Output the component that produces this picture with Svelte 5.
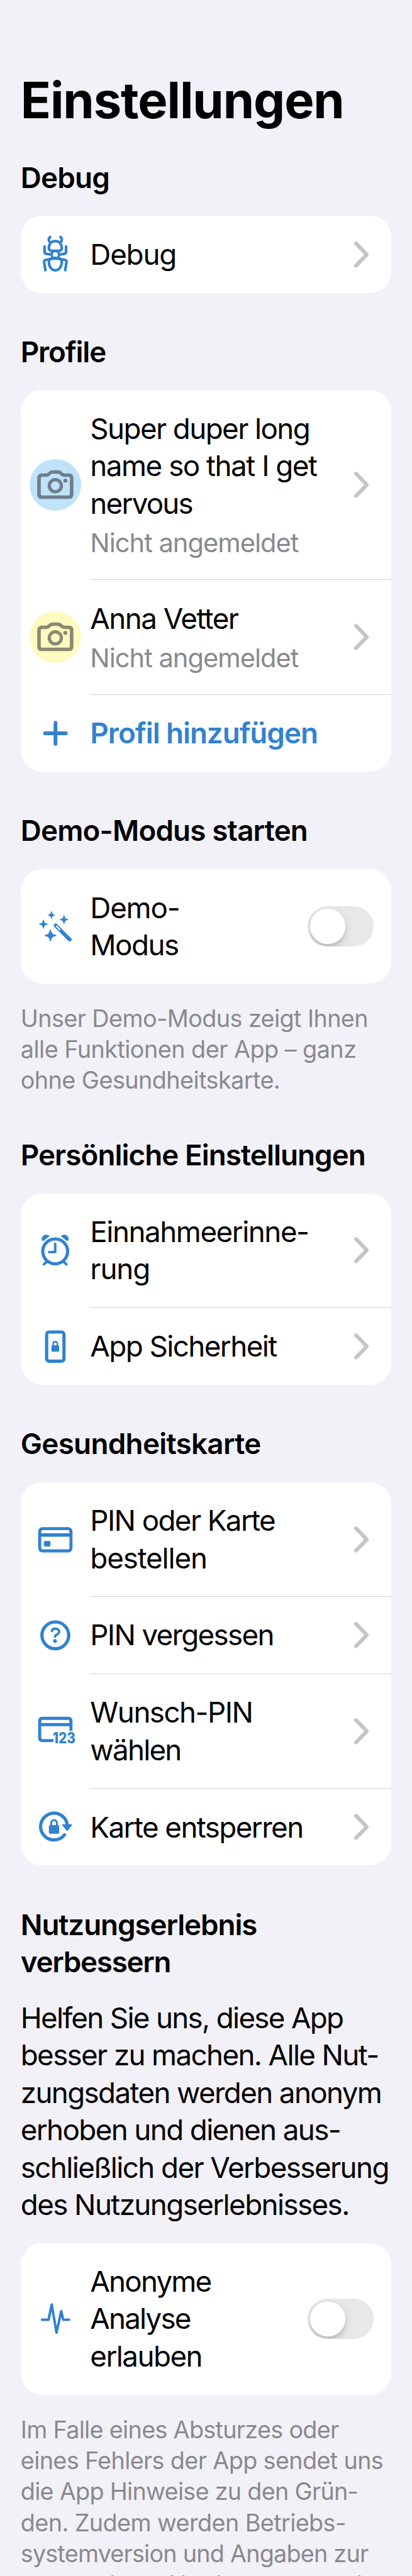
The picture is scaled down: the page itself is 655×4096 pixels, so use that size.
<script>
  // Each line of copy is a pair: the text and its tracking in em.
  const sections = [
    {
      title: [['Debug', -0.0169]],
      rows: [{ icon: 'ant', lines: [['Debug', -0.0263]] }]
    },
    {
      title: [['Profile', -0.0257]],
      rows: [
        {
          icon: 'camera', tone: 'blue',
          lines: [['Super duper long', -0.0349], ['name so that I get', -0.0325], ['nervous', -0.0387]],
          status: ['Nicht angemeldet', -0.0242]
        },
        {
          icon: 'camera', tone: 'yellow',
          lines: [['Anna Vetter', -0.0341]],
          status: ['Nicht angemeldet', -0.0242]
        },
        { icon: 'plus', lines: [['Profil hinzufügen', -0.0227]], action: true }
      ]
    },
    {
      title: [['Demo-Modus starten', -0.0178]],
      rows: [{ icon: 'wand', lines: [['Demo-', -0.026], ['Modus', -0.0337]], toggle: true }],
      footer: [
        ['Unser Demo-Modus zeigt Ihnen', -0.0157],
        ['alle Funktionen der App – ganz', -0.0141],
        ['ohne Gesundheitskarte.', -0.0148]
      ]
    },
    {
      title: [['Persönliche Einstellungen', -0.0203]],
      rows: [
        { icon: 'alarm', lines: [['Einnahmeerinne-', -0.0321], ['rung', -0.0245]] },
        { icon: 'phone', lines: [['App Sicherheit', -0.0343]] }
      ]
    },
    {
      title: [['Gesundheitskarte', -0.0149]],
      rows: [
        { icon: 'card', lines: [['PIN oder Karte', -0.0353], ['bestellen', -0.0248]] },
        { icon: 'question', lines: [['PIN vergessen', -0.0368]] },
        { icon: 'card123', lines: [['Wunsch-PIN', -0.0333], ['wählen', -0.0387]] },
        { icon: 'unlock', lines: [['Karte entsperren', -0.0342]] }
      ]
    },
    {
      title: [['Nutzungserlebnis', -0.0237], ['verbessern', -0.0278]],
      intro: [
        ['Helfen Sie uns, diese App', -0.0369],
        ['besser zu machen. Alle Nut-', -0.0359],
        ['zungsdaten werden anonym', -0.0356],
        ['erhoben und dienen aus-', -0.0354],
        ['schließlich der Verbesserung', -0.0349],
        ['des Nutzungserlebnisses.', -0.0348]
      ],
      rows: [
        { icon: 'pulse', lines: [['Anonyme', -0.0396], ['Analyse', -0.0398], ['erlauben', -0.0339]], toggle: true }
      ],
      footer: [
        ['Im Falle eines Absturzes oder', -0.0185],
        ['eines Fehlers der App sendet uns', -0.0169],
        ['die App Hinweise zu den Grün-', -0.0191],
        ['den. Zudem werden Betriebs-', -0.0158],
        ['systemversion und Angaben zur', -0.0208],
        ['verwendeten Hardware gesendet', -0.0175]
      ]
    }
  ];

  // Four-pointed sparkle centred at x, y with arm length r.
  function sparkle(x, y, r) {
    const a = r * 0.22;
    const t = r * 0.09;
    return `M${x - t} ${y - r}Q${x} ${y - r - 1} ${x + t} ${y - r}C${x + a} ${y - a * 1.6} ${x + a * 1.6} ${y - a} ${x + r} ${y - t}Q${x + r + 1} ${y} ${x + r} ${y + t}C${x + a * 1.6} ${y + a} ${x + a} ${y + a * 1.6} ${x + t} ${y + r}Q${x} ${y + r + 1} ${x - t} ${y + r}C${x - a} ${y + a * 1.6} ${x - a * 1.6} ${y + a} ${x - r} ${y + t}Q${x - r - 1} ${y} ${x - r} ${y - t}C${x - a * 1.6} ${y - a} ${x - a} ${y - a * 1.6} ${x - t} ${y - r}Z`;
  }
</script>

{#snippet textLines(lines)}
  {#each lines as [text, tracking]}
    <span class="line" style="letter-spacing: {tracking}em">{text}</span>
  {/each}
{/snippet}

{#snippet glyph(name)}
  <svg class="icon" viewBox="-60 -60 120 120" aria-hidden="true">
    {#if name === 'ant'}
      <g class="stroke" stroke-width="6.2">
        <path d="M-12 -39.8C-16 -36.5 -16.5 -31 -12.5 -27.5M12 -39.8C16 -36.5 16.5 -31 12.5 -27.5" />
        <path d="M-8.5 -7.4C-13 -7.4 -15 -10.5 -15 -14C-15 -24 -9 -30 0 -30C9 -30 15 -24 15 -14C15 -10.5 13 -7.4 8.5 -7.4Z" />
        <circle cx="0" cy="1.6" r="8.6" stroke-width="5.4" />
        <path d="M-25 -17.5V-5C-25 -2 -24 -1 -21 -0.6L-9 1M25 -17.5V-5C25 -2 24 -1 21 -0.6L9 1" />
        <path d="M-23 37.5L-26.2 18C-26.5 15.5 -25.5 14.8 -23 14L0 8.8L23 14C25.5 14.8 26.5 15.5 26.2 18L23 37.5" />
        <path d="M-8 10.5H8C12.5 10.5 15 13.5 15 18C15 29 9 38 0 38C-9 38 -15 29 -15 18C-15 13.5 -12.5 10.5 -8 10.5Z" />
      </g>
    {:else if name === 'camera'}
      <g class="stroke" stroke-width="8.3">
        <path d="M-31.5 -22.7H-20C-15 -22.7 -12.5 -30 -7.5 -30H7.5C12.5 -30 15 -22.7 20 -22.7H31.5Q38 -22.7 38 -16V22Q38 28.6 31.5 28.6H-31.5Q-38 28.6 -38 22V-16Q-38 -22.7 -31.5 -22.7Z" />
        <circle cx="0" cy="2" r="14.1" stroke-width="7.7" />
      </g>
      <circle cx="23.4" cy="-9.7" r="4.7" />
    {:else if name === 'plus'}
      <path class="stroke" stroke-width="8.6" d="M0.3 -24.5V24.5M-24 0H24.6" />
    {:else if name === 'wand'}
      <path d={sparkle(-9, -26.3, 8.5)} />
      <path d={sparkle(-27.7, -5.3, 9.8)} />
      <path d={sparkle(20.3, -15.7, 9.8)} />
      <path d={sparkle(-11.4, 21.3, 13.2)} />
      <path class="stroke" stroke-width="8.9" d="M0.9 -2.1L33.4 30.6" />
      <path d="M2 -1L11.2 8.4" fill="none" stroke="#fff" stroke-width="3.2" />
    {:else if name === 'alarm'}
      <g class="stroke" stroke-width="5.8">
        <circle cx="-0.3" cy="2.7" r="29" stroke-width="7.4" />
        <path d="M-0.3 -15V4.3H-14.7M-26.7 33L-19.5 26.5M26.1 33L19 26.5" />
      </g>
      <path d="M-27.5 -21.8C-29 -20.5 -31.6 -21.5 -31.6 -26.5C-31.6 -32 -27 -36.2 -21.5 -36.2C-17 -36.2 -14 -34.5 -14.2 -33C-14.3 -31.8 -15 -31.3 -16 -30.6Z" />
      <path d="M26.9 -21.8C28.4 -20.5 31 -21.5 31 -26.5C31 -32 26.4 -36.2 20.9 -36.2C16.4 -36.2 13.4 -34.5 13.6 -33C13.7 -31.8 14.4 -31.3 15.4 -30.6Z" />
    {:else if name === 'phone'}
      <rect class="stroke" stroke-width="7.5" x="-20.2" y="-33.7" width="40.3" height="68" rx="5.5" />
      <rect x="-9" y="-2.8" width="17.8" height="15" rx="2.4" />
      <path class="stroke" stroke-width="3.6" d="M-5 -2V-6C-5 -13 4.8 -13 4.8 -6V-2" />
    {:else if name === 'card'}
      <rect class="stroke" stroke-width="7.2" x="-36.4" y="-25.4" width="72.8" height="51.8" rx="6.5" />
      <path d="M-36 -14.5H36V-6.7H-36Z" />
      <rect x="-26.7" y="3.5" width="15.4" height="13" rx="3.4" />
    {:else if name === 'question'}
      <circle class="stroke" stroke-width="7.6" cx="0" cy="0.5" r="31.2" />
      <path class="stroke" stroke-width="5.6" d="M-8 -9.6C-7 -13.8 -4 -14.9 0 -14.9C5 -14.9 8.8 -12.2 8.8 -7.8C8.8 -1.8 -0.5 -1.8 -0.7 3.6" />
      <circle cx="-0.7" cy="13.6" r="4.3" />
    {:else if name === 'card123'}
      <path class="stroke butt" stroke-width="7.2" d="M-4.5 23H-30Q-36.4 23 -36.4 16.5V-22.4Q-36.4 -28.9 -30 -28.9H30Q36.4 -28.9 36.4 -22.4V0" />
      <path d="M-36 -18H36V-10.6H-36Z" />
      <text x="-6" y="29.4" textLength="53" lengthAdjust="spacingAndGlyphs">123</text>
    {:else if name === 'unlock'}
      <path class="stroke" stroke-width="7.6" d="M21.5 18.3A31.2 31.2 0 1 1 27.7 -6" />
      <path class="stroke solid" stroke-width="3" d="M17.5 -4.8H37.5L27.7 8Z" />
      <rect x="-15" y="-4.2" width="24" height="20.2" rx="3.2" />
      <path class="stroke" stroke-width="4.6" d="M-9.8 -3V-8.5C-9.8 -18.6 3.8 -18.6 3.8 -8.5V-3" />
    {:else if name === 'pulse'}
      <path class="stroke" stroke-width="5.8" d="M-31 2.3H-15.7L-8.4 -33.2L2.7 32.5L13.7 -17.5L18.4 2.3H32" />
    {/if}
  </svg>
{/snippet}

<main>
  <h1>Einstellungen</h1>
  {#each sections as section}
    <section>
      <h2>{@render textLines(section.title)}</h2>
      {#if section.intro}
        <p class="intro">{@render textLines(section.intro)}</p>
      {/if}
      <div class="card">
        {#each section.rows as row}
          <div class="row" class:action={row.action}>
            <div class="lead">
              {#if row.tone}
                <div class="avatar {row.tone}">{@render glyph(row.icon)}</div>
              {:else}
                {@render glyph(row.icon)}
              {/if}
            </div>
            <div class="body">
              <div class="label">
                {@render textLines(row.lines)}
                {#if row.status}
                  <span class="status" style="letter-spacing: {row.status[1]}em">{row.status[0]}</span>
                {/if}
              </div>
              {#if row.toggle}
                <div class="toggle" role="switch" aria-checked="false" aria-label={row.lines[0][0]} tabindex="0">
                  <div class="knob"></div>
                </div>
              {:else if !row.action}
                <svg class="chevron" viewBox="0 0 40 64" aria-hidden="true">
                  <path d="M7.5 6.2L32.5 32L7.5 57.8" />
                </svg>
              {/if}
            </div>
          </div>
        {/each}
      </div>
      {#if section.footer}
        <p class="footer">{@render textLines(section.footer)}</p>
      {/if}
    </section>
  {/each}
</main>

<style>
  /* 1rem equals 100 design units. */
  :global(html) {
    font-size: 68.2667px;
  }
  :global(body) {
    margin: 0;
    background: #f2f1f7;
  }
  main {
    box-sizing: border-box;
    height: 60rem;
    overflow: hidden;
    padding: 1.616rem 0.48rem 0;
    background: #f2f1f7;
    color: #000;
    font-family: Inter, "Liberation Sans", sans-serif;
    font-size: 0.67rem;
    line-height: 0.87rem;
    white-space: nowrap;
  }
  h1 {
    margin: 0 0 0.644rem;
    font-size: 1.164rem;
    font-weight: 700;
    line-height: 1.44rem;
    letter-spacing: -0.014em;
  }
  section {
    margin-bottom: 0.94rem;
  }
  h2 {
    margin: 0 0 0.46rem;
    font-size: inherit;
    font-weight: 600;
    line-height: inherit;
  }
  .line,
  .status {
    display: block;
  }
  .intro {
    margin: -0.025rem 0 0.46rem;
  }
  .footer {
    margin: 0.46rem 0 0;
    color: #89898e;
    font-size: 0.553rem;
    line-height: 0.72rem;
  }
  .card {
    border-radius: 0.5rem;
    background: #fff;
    overflow: hidden;
  }
  .row {
    display: flex;
    align-items: stretch;
  }
  .lead {
    flex: none;
    width: 1.62rem;
    display: flex;
    align-items: center;
    justify-content: center;
    color: #3182d0;
  }
  .icon {
    display: block;
    flex: none;
    width: 1.2rem;
    height: 1.2rem;
    fill: currentColor;
  }
  .icon .stroke {
    fill: none;
    stroke: currentColor;
    stroke-linecap: round;
    stroke-linejoin: round;
  }
  .icon .solid {
    fill: currentColor;
  }
  .icon .butt {
    stroke-linecap: butt;
  }
  .icon text {
    font-size: 34.8px;
    font-weight: 800;
    letter-spacing: 0;
  }
  .avatar {
    width: 1.2rem;
    height: 1.2rem;
    border-radius: 50%;
  }
  .avatar.blue {
    background: #bfe3f8;
    color: #707e8c;
  }
  .avatar.yellow {
    background: #fefbc0;
    color: #8a8a73;
  }
  .body {
    flex: 1;
    display: flex;
    align-items: center;
    justify-content: space-between;
    padding: 0.46rem 0;
  }
  .row + .row .body {
    border-top: 1px solid #d3d3d5;
    margin-top: -0.005rem;
  }
  .action .label {
    color: #3182d0;
    font-weight: 600;
  }
  .status {
    padding-top: 0.1rem;
    color: #89898e;
    font-size: 0.61rem;
    line-height: 0.78rem;
  }
  .chevron {
    flex: none;
    width: 0.4rem;
    height: 0.64rem;
    margin-right: 0.5rem;
  }
  .chevron path {
    fill: none;
    stroke: #c5c5c7;
    stroke-width: 9;
    stroke-linecap: round;
    stroke-linejoin: round;
  }
  .toggle {
    flex: none;
    box-sizing: border-box;
    width: 1.53rem;
    height: 0.93rem;
    margin-right: 0.42rem;
    padding: 0.06rem;
    border-radius: 0.465rem;
    background: #e8e8e8;
    overflow: hidden;
  }
  .knob {
    width: 0.81rem;
    height: 0.81rem;
    border-radius: 50%;
    background: #fff;
    box-shadow: 0 0.09rem 0.24rem rgb(0 0 0 / 15%), 0 0.09rem 0.03rem rgb(0 0 0 / 6%);
  }
</style>
